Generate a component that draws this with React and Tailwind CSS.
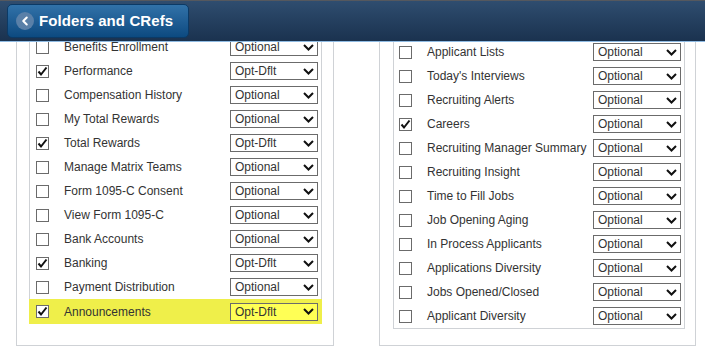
import { ChevronLeft } from 'lucide-react';

const leftRows = [
  { label: 'Benefits Enrollment', on: false, value: 'Optional' },
  { label: 'Performance', on: true, value: 'Opt-Dflt' },
  { label: 'Compensation History', on: false, value: 'Optional' },
  { label: 'My Total Rewards', on: false, value: 'Optional' },
  { label: 'Total Rewards', on: true, value: 'Opt-Dflt' },
  { label: 'Manage Matrix Teams', on: false, value: 'Optional' },
  { label: 'Form 1095-C Consent', on: false, value: 'Optional' },
  { label: 'View Form 1095-C', on: false, value: 'Optional' },
  { label: 'Bank Accounts', on: false, value: 'Optional' },
  { label: 'Banking', on: true, value: 'Opt-Dflt' },
  { label: 'Payment Distribution', on: false, value: 'Optional' },
  { label: 'Announcements', on: true, value: 'Opt-Dflt', hot: true },
];

const rightRows = [
  { label: 'Applicant Lists', on: false },
  { label: "Today's Interviews", on: false },
  { label: 'Recruiting Alerts', on: false },
  { label: 'Careers', on: true },
  { label: 'Recruiting Manager Summary', on: false },
  { label: 'Recruiting Insight', on: false },
  { label: 'Time to Fill Jobs', on: false },
  { label: 'Job Opening Aging', on: false },
  { label: 'In Process Applicants', on: false },
  { label: 'Applications Diversity', on: false },
  { label: 'Jobs Opened/Closed', on: false },
  { label: 'Applicant Diversity', on: false },
];

function Check({ on }) {
  return (
    <span className="w-[13px] h-[13px] border border-[#6b6b6b] bg-white flex items-center justify-center shrink-0">
      {on && (
        <svg width="11" height="11" viewBox="0 0 11 11">
          <path d="M1.5 5.5 L4 8.5 L9.5 1.5" fill="none" stroke="#111" strokeWidth="2" />
        </svg>
      )}
    </span>
  );
}

function Select({ value, hot }) {
  return (
    <div
      className={`w-[88px] h-[18px] border border-[#6b6b6b] flex items-center justify-between pl-[4px] pr-[3px] text-[12px] text-[#333] ${
        hot ? 'bg-[#ffff55]' : 'bg-white'
      }`}
    >
      <span>{value}</span>
      <svg width="11" height="7" viewBox="0 0 11 7">
        <polyline points="1,1 5.5,5.5 10,1" fill="none" stroke="#111" strokeWidth="2" />
      </svg>
    </div>
  );
}

function Row({ row, pl }) {
  return (
    <div
      className={`flex items-center h-[24px] pr-[3px] ${pl} ${
        row.hot ? 'bg-[#efef4a] -mx-px -mb-px h-[25px] pl-[7px] pr-[4px] relative' : ''
      }`}
    >
      <Check on={row.on} />
      <span className="ml-[15px] flex-1 text-[12px] text-[#333] whitespace-nowrap">{row.label}</span>
      <Select value={row.value || 'Optional'} hot={row.hot} />
    </div>
  );
}

export default function App() {
  return (
    <div className="w-[705px] h-[347px] overflow-hidden bg-white font-['Liberation_Sans',Arial,sans-serif]">
      {/* Header bar */}
      <div className="relative z-10 h-[42px] bg-gradient-to-b from-[#2f4d6f] to-[#1a324f] border-b border-[#8fbbe3] border-t border-t-[#55585e] flex items-center pl-[7px]">
        <div className="w-[182px] h-[34px] rounded-[5px] border border-[#0b3a66] bg-gradient-to-b from-[#3172a9] to-[#0c4a80] flex items-center pl-[8px]">
          <span className="w-[18px] h-[18px] rounded-full bg-[#5a80a8] flex items-center justify-center">
            <ChevronLeft size={14} strokeWidth={3.5} color="#fff" />
          </span>
          <span className="ml-[5px] text-white font-bold text-[15px] tracking-[0.1px]">Folders and CRefs</span>
        </div>
      </div>

      {/* Panels */}
      <div className="flex -mt-[21px]">
        <div className="ml-[16px] w-[318px] border border-[#cfd2d6] pt-[12px] pl-[12px] pr-[11px] pb-[15px]">
          <div className="border border-[#cfd2d6]">
            {leftRows.map((r) => (
              <Row key={r.label} row={r} pl="pl-[6px]" />
            ))}
          </div>
        </div>

        <div className="ml-[45px] mt-[5px] w-[317px] border border-[#cfd2d6] pt-[12px] pl-[13px] pr-[10px] pb-[16px]">
          <div className="border border-[#cfd2d6]">
            {rightRows.map((r) => (
              <Row key={r.label} row={r} pl="pl-[5px]" />
            ))}
          </div>
        </div>
      </div>
    </div>
  );
}
